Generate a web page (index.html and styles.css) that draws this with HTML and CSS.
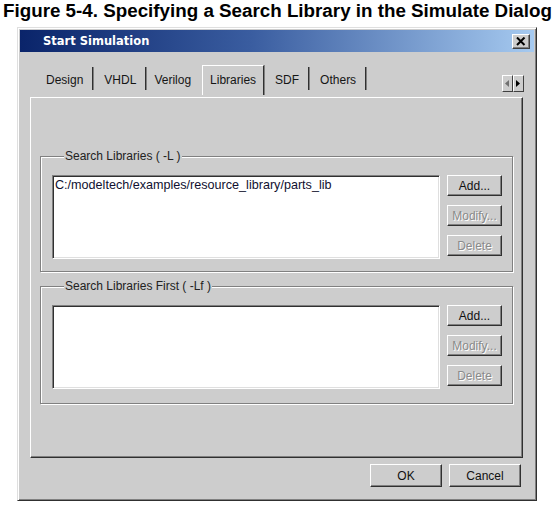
FILE: index.html
```html
<!DOCTYPE html>
<html>
<head>
<meta charset="utf-8">
<link rel="stylesheet" href="styles.css">
</head>
<body>
<h1 class="figure-title">Figure 5-4. Specifying a Search Library in the Simulate Dialog</h1>
<div class="dialog">
  <div class="titlebar">
    <span class="title-text">Start Simulation</span>
    <span class="close-btn"><svg width="10" height="9" viewBox="0 0 10 9"><path d="M1 0.5 L8.5 8 M8.5 0.5 L1 8" stroke="#000" stroke-width="2" fill="none"/></svg></span>
  </div>
  <div class="tabstrip">
    <div class="tab">Design</div>
    <div class="tab">VHDL</div>
    <div class="tab tab-before-active">Verilog</div>
    <div class="tab tab-active">Libraries</div>
    <div class="tab">SDF</div>
    <div class="tab">Others</div>
    <div class="tab-scroll">
      <span class="scroll-btn"><svg width="5" height="7" viewBox="0 0 5 7"><path d="M4 0 L0 3.5 L4 7 Z" fill="#707070"/></svg></span>
      <span class="scroll-btn"><svg width="5" height="7" viewBox="0 0 5 7"><path d="M0 0 L4 3.5 L0 7 Z" fill="#000"/></svg></span>
    </div>
  </div>
  <div class="panel">
    <fieldset class="group">
      <legend class="group-label">Search Libraries ( -L )</legend>
      <div class="group-row">
        <div class="listbox"><div class="list-item">C:/modeltech/examples/resource_library/parts_lib</div></div>
        <div class="btn-col">
          <div class="btn">Add...</div>
          <div class="btn btn-disabled">Modify...</div>
          <div class="btn btn-disabled">Delete</div>
        </div>
      </div>
    </fieldset>
    <fieldset class="group group-second">
      <legend class="group-label">Search Libraries First ( -Lf )</legend>
      <div class="group-row">
        <div class="listbox"></div>
        <div class="btn-col">
          <div class="btn">Add...</div>
          <div class="btn btn-disabled">Modify...</div>
          <div class="btn btn-disabled">Delete</div>
        </div>
      </div>
    </fieldset>
  </div>
  <div class="footer">
    <div class="btn btn-wide">OK</div>
    <div class="btn btn-wide">Cancel</div>
  </div>
</div>
</body>
</html>
```
FILE: styles.css
```css
html, body {
  margin: 0;
  padding: 0;
  background: #fff;
}
body {
  width: 554px;
  height: 506px;
  overflow: hidden;
  font-family: "Liberation Sans", Arial, sans-serif;
}
.figure-title {
  margin: 0;
  padding: 1px 0 0 3px;
  height: 26px;
  font-size: 18.8px;
  line-height: 20px;
  font-weight: bold;
  color: #000;
  white-space: nowrap;
}
.dialog {
  margin-left: 17px;
  width: 520px;
  height: 474px;
  box-sizing: border-box;
  background: #cdcdcd;
  border: 1px solid;
  border-color: #dfdfdf #303030 #303030 #dfdfdf;
  box-shadow: inset 1px 1px 0 #fff, inset -1px -1px 0 #808080;
  padding: 2px;
  font-size: 12px;
  color: #151515;
  display: flex;
  flex-direction: column;
}
.titlebar {
  height: 22px;
  flex: none;
  background: linear-gradient(to right, #0a246a 0%, #3a5da0 45%, #a6caf0 100%);
  display: flex;
  align-items: center;
  padding-left: 23px;
  padding-right: 4px;
}
.title-text {
  color: #fff;
  font-weight: bold;
  font-family: "DejaVu Sans", "Liberation Sans", sans-serif;
  font-size: 11.5px;
  flex: 1;
}
.close-btn {
  width: 18px;
  height: 15px;
  box-sizing: border-box;
  background: #cdcdcd;
  border: 1px solid;
  border-color: #fff #404040 #404040 #fff;
  box-shadow: inset -1px -1px 0 #808080;
  display: flex;
  align-items: center;
  justify-content: center;
}
.tabstrip {
  height: 45px;
  flex: none;
  display: flex;
  align-items: flex-start;
  padding: 15px 10px 0 16px;
  box-sizing: border-box;
}
.tab {
  height: 23px;
  box-sizing: border-box;
  padding: 3px 9px 0 10px;
  line-height: 20px;
  border-right: 1px solid #303030;
  box-shadow: 1px 0 0 #808080;
  margin-right: 1px;
}
.tab-before-active {
  border-right-color: transparent;
  box-shadow: none;
  padding-left: 7px;
}
.tab-active {
  margin-top: -2px;
  height: 30px;
  padding: 4px 7px 0 7px;
  line-height: 20px;
  border-left: 1px solid #fff;
  border-top: 1px solid #fff;
  border-right: 1px solid #303030;
  position: relative;
  z-index: 1;
  background: #cdcdcd;
}
.tab-scroll {
  margin-left: auto;
  margin-top: 8px;
  display: flex;
}
.scroll-btn {
  width: 11px;
  height: 17px;
  box-sizing: border-box;
  border: 1px solid;
  border-color: #fff #404040 #404040 #fff;
  display: flex;
  align-items: center;
  justify-content: center;
}
.panel {
  height: 361px;
  flex: none;
  margin: 0 11px 0 10px;
  box-sizing: border-box;
  border: 1px solid;
  border-color: #fff #303030 #303030 #fff;
  box-shadow: inset -1px -1px 0 #808080;
  padding: 51px 9px 0 9px;
  display: flex;
  flex-direction: column;
  gap: 7px;
}
.group {
  margin: 0;
  padding: 12px 10px 12px 11px;
  border: 1px solid #808080;
  box-shadow: 1px 1px 0 #fff, inset 1px 1px 0 #fff;
  min-width: 0;
}
.group-second {
  padding-bottom: 14px;
}
.group-label {
  margin-left: 12px;
  padding: 0 1px;
  line-height: 14px;
  background: #cdcdcd;
  color: #222;
}
.group-row {
  display: flex;
  gap: 7px;
}
.listbox {
  width: 389px;
  height: 84px;
  box-sizing: border-box;
  background: #fff;
  border: 1px solid;
  border-color: #808080 #fff #fff #808080;
  box-shadow: inset 1px 1px 0 #303030, inset -1px -1px 0 #dfdfdf;
  padding: 2px 2px;
}
.list-item {
  font-size: 12.6px;
  line-height: 14px;
  color: #101030;
  white-space: nowrap;
}
.btn-col {
  display: flex;
  flex-direction: column;
  gap: 9px;
}
.btn {
  width: 55px;
  height: 21px;
  box-sizing: border-box;
  border: 1px solid;
  border-color: #fff #303030 #303030 #fff;
  box-shadow: inset -1px -1px 0 #808080;
  display: flex;
  align-items: center;
  justify-content: center;
  color: #111;
}
.btn-disabled {
  color: #8a8a8a;
  text-shadow: 1px 1px 0 #fff;
}
.footer {
  display: flex;
  justify-content: flex-end;
  gap: 7px;
  padding: 6px 13px 0 0;
}
.btn-wide {
  width: 72px;
  height: 23px;
}
```
